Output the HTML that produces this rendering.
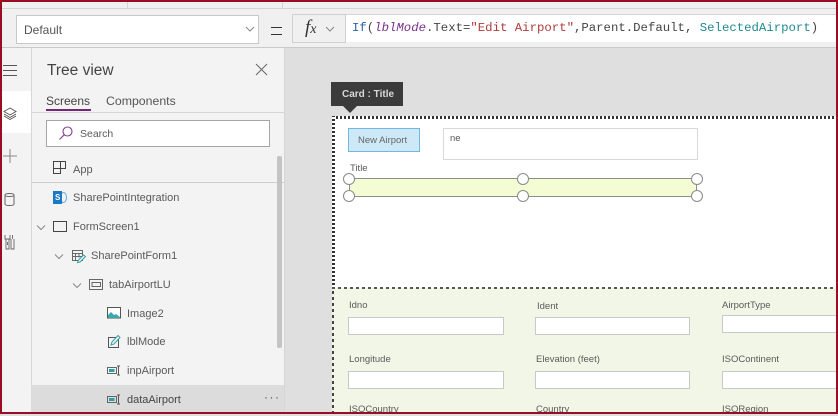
<!DOCTYPE html>
<html><head><meta charset="utf-8"><style>
html,body{margin:0;padding:0}
body{width:838px;height:414px;overflow:hidden;position:relative;background:#dfdfdf;font-family:"Liberation Sans",sans-serif;color:#444}
div,span.a,svg{position:absolute}
.t{white-space:nowrap;line-height:16px;font-size:11px;color:#5a5a5a}
.l{white-space:nowrap;line-height:12px;font-size:9.5px;color:#5a5a5a}
.i{background:#fff;border:1px solid #c8c8c8;box-sizing:border-box;height:18px}
.h{width:10px;height:10px;border-radius:50%;background:#fff;border:1.5px solid #8a8a8a;box-sizing:content-box}
</style></head><body>
<div style="left:0;top:0;width:838px;height:8px;background:#f0f0f0"></div>
<div style="left:127px;top:2px;width:1px;height:6px;background:#d4d4d4"></div>
<div style="left:282px;top:2px;width:1px;height:6px;background:#d4d4d4"></div>
<div style="left:0;top:8px;width:838px;height:1px;background:#d4d4d4"></div>
<div style="left:0;top:9px;width:838px;height:38px;background:#f0f0f0"></div>
<div style="left:16px;top:15px;width:243px;height:29px;background:#fff;border:1px solid #c8c8c8;box-sizing:border-box"></div>
<div class="t" style="left:24px;top:22px;font-size:12px;color:#555">Default</div>
<svg style="left:245px;top:25px" width="10" height="8"><path d="M1 2l4 4 4-4" fill="none" stroke="#888"/></svg>
<div style="left:271px;top:27px;width:11px;height:1px;background:#333"></div>
<div style="left:271px;top:34px;width:11px;height:1px;background:#333"></div>
<div style="left:292px;top:14px;width:54px;height:29px;background:#f0f0f0;border:1px solid #d0d0d0;box-sizing:border-box"></div>
<div style="left:305px;top:17px;font:italic 19px/22px 'Liberation Serif',serif;color:#333;white-space:nowrap">f<span style="font-size:14px">x</span></div>
<svg style="left:325px;top:25px" width="10" height="8"><path d="M1 2l4 4 4-4" fill="none" stroke="#888"/></svg>
<div style="left:346px;top:14px;width:492px;height:28px;background:#fff;border-top:1px solid #d4d4d4;box-sizing:border-box"></div>
<div style="left:352px;top:20px;font:12.33px/16px 'Liberation Mono',monospace;color:#444;white-space:pre"><span style="color:#2b63a8">If</span>(<span style="color:#7a2e8e;font-style:italic">lblMode</span>.Text=<span style="color:#b03a3a">"Edit Airport"</span>,Parent.Default, <span style="color:#1f8a8f">SelectedAirport</span>)</div>
<div style="left:0;top:47px;width:838px;height:1px;background:#c9c9c9"></div>

<div style="left:0;top:48px;width:31px;height:366px;background:#f3f3f3"></div>
<div style="left:0;top:91px;width:31px;height:42px;background:#fff"></div>
<div style="left:31px;top:48px;width:1px;height:366px;background:#d6d6d6"></div>
<div style="left:32px;top:48px;width:252px;height:366px;background:#f3f3f3"></div>
<svg style="left:0;top:48px" width="31" height="366" fill="none" stroke="#555">
<path d="M3 17.500h14M3 22.500h14M3 27.500h14"/>
<path d="M10 60l6 3.500-6 3.500-6-3.500zM4 66l6 3.500 6-3.500M4 68l6 3.500 6-3.500" stroke-width=".9"/>
<path d="M10 101v14M3 108h14" stroke="#888"/>
<path d="M5 147v9c0 2 9 2 9 0v-9c0-2-9-2-9 0c0 2 9 2 9 0" stroke="#666"/>
<path d="M6 191v10h3v-10M11 191v10h3v-10M5 187v4h5v-4M12.500 187v4M7.500 194v3" stroke="#666" stroke-width=".9"/>
</svg>
<div style="left:47px;top:61px;font-size:15.500px;line-height:20px;color:#444;white-space:nowrap">Tree view</div>
<svg style="left:255px;top:63px" width="13" height="13"><path d="M1 1l11 11M12 1L1 12" stroke="#666" fill="none"/></svg>
<div class="t" style="left:46px;top:93px;font-size:12px;color:#444">Screens</div>
<div class="t" style="left:106px;top:93px;font-size:12.300px;color:#555">Components</div>
<div style="left:46px;top:109px;width:45px;height:2px;background:#742774"></div>
<div style="left:32px;top:112px;width:252px;height:1px;background:#d6d6d6"></div>
<div style="left:46px;top:120px;width:224px;height:27px;background:#fff;border:1px solid #a6a6a6;box-sizing:border-box"></div>
<svg style="left:58px;top:125px" width="16" height="16" fill="none" stroke="#8a3d8f" stroke-width="1.100"><circle cx="9.500" cy="6.500" r="4.500"/><path d="M6.300 9.700L1.500 14.500"/></svg>
<div class="l" style="left:80px;top:128px;font-size:10.500px">Search</div>

<svg style="left:53px;top:161px" width="14" height="14" fill="none" stroke="#444"><path d="M.5 7.500h12V.5H.5v12h7V.5"/></svg>
<div class="t" style="left:73px;top:162px">App</div>
<div style="left:32px;top:182px;width:252px;height:1px;background:#cfcfcf"></div>

<div style="left:60px;top:192px;width:7px;height:11px;border-radius:50%;border:1px solid #5ab0e0;box-sizing:border-box"></div>
<div style="left:53px;top:191px;width:9px;height:13px;background:#1b78c4"></div>
<div style="left:55px;top:192px;font:bold 8px/11px 'Liberation Sans',sans-serif;color:#fff">S</div>
<div class="t" style="left:73px;top:190px">SharePointIntegration</div>

<svg style="left:36px;top:224px" width="11" height="8"><path d="M1 1.500l4 4 4-4" fill="none" stroke="#888"/></svg>
<div style="left:53px;top:221px;width:14px;height:11px;border:1px solid #444;box-sizing:border-box"></div>
<div class="t" style="left:73px;top:219px">FormScreen1</div>

<svg style="left:54px;top:253px" width="11" height="8"><path d="M1 1.500l4 4 4-4" fill="none" stroke="#888"/></svg>
<svg style="left:72px;top:250px" width="14" height="14" fill="none"><path d="M.5.500h10v10H.5zM.5 3.500h10M.5 6.500h10M3.500 3.500v7M7 3.500v4" stroke="#666"/><path d="M5.500 12.500l1-2.500 5-5 2 1.500-5.500 5.500z" stroke="#2f9fa8" fill="#f3f3f3"/></svg>
<div class="t" style="left:91px;top:248px">SharePointForm1</div>

<svg style="left:72px;top:282px" width="11" height="8"><path d="M1 1.500l4 4 4-4" fill="none" stroke="#888"/></svg>
<svg style="left:89px;top:279px" width="14" height="11" fill="none" stroke="#666"><path d="M.5.500h13v10H.5zM3 3.500h8.500v4H3z"/></svg>
<div class="t" style="left:109px;top:277px">tabAirportLU</div>

<svg style="left:107px;top:307px" width="15" height="12"><rect x=".5" y=".5" width="13" height="10.500" fill="#fff" stroke="#555"/><path d="M1 11V8l3-3 3 3 2-1 4 3v1z" fill="#3aa8ad"/></svg>
<div class="t" style="left:127px;top:306px">Image2</div>

<svg style="left:108px;top:334px" width="14" height="15" fill="none"><path d="M.5 3.500h10v10H.5z" stroke="#555"/><path d="M3 11l1-3 6-6.500 2 2-6 6.500z" stroke="#2f9fa8" fill="#f3f3f3"/></svg>
<div class="t" style="left:127px;top:334px">lblMode</div>

<svg style="left:107px;top:365px" width="16" height="12" fill="none"><rect x=".5" y="2.500" width="9" height="6" stroke="#666"/><rect x="2" y="4" width="5.500" height="3" fill="#2f9fa8"/><path d="M10 1h3M10 10h3M11.500 1v9" stroke="#555"/></svg>
<div class="t" style="left:127px;top:363px">inpAirport</div>

<div style="left:277px;top:156px;width:5px;height:192px;background:#c4c4c4;border-radius:2px"></div>
<div style="left:284px;top:48px;width:1px;height:366px;background:#d6d6d6"></div>

<div style="left:31px;top:385px;width:253px;height:29px;background:#dcdcdc"></div>
<svg style="left:107px;top:394px" width="16" height="12" fill="none"><rect x=".5" y="2.500" width="9" height="6" stroke="#666"/><rect x="2" y="4" width="5.500" height="3" fill="#2f9fa8"/><path d="M10 1h3M10 10h3M11.500 1v9" stroke="#555"/></svg>
<div class="t" style="left:127px;top:392px;color:#444">dataAirport</div>
<div style="left:264px;top:390px;font-size:12px;line-height:14px;color:#555;letter-spacing:1.500px">···</div>

<div style="left:331px;top:82px;width:72px;height:24px;background:#3b3b3b"></div>
<div style="left:342px;top:88px;font-size:10px;font-weight:bold;line-height:14px;color:#d8d8d8;white-space:nowrap">Card : Title</div>
<div style="left:343px;top:106px;width:0;height:0;border-left:7px solid transparent;border-right:7px solid transparent;border-top:7px solid #3b3b3b"></div>

<div style="left:332px;top:116px;width:506px;height:173px;background:#fff"></div>
<div style="left:332px;top:116px;width:506px;height:3px;background:repeating-linear-gradient(90deg,#333 0 2px,#fff 2px 4px)"></div>
<div style="left:332px;top:116px;width:3px;height:173px;background:repeating-linear-gradient(0deg,#333 0 2px,#fff 2px 4px)"></div>

<div style="left:348px;top:128px;width:72px;height:24px;background:#cde8f6;border:1px solid #74b5e4;box-sizing:border-box"></div>
<div class="l" style="left:358px;top:135px;color:#666">New Airport</div>
<div style="left:443px;top:128px;width:255px;height:32px;background:#fff;border:1px solid #d8d8d8;box-sizing:border-box"></div>
<div class="l" style="left:450px;top:133px">ne</div>
<div class="l" style="left:350px;top:163px">Title</div>
<div style="left:349px;top:178px;width:348px;height:18.500px;background:#f4fcd4;border:1px solid #8c8c8c;box-sizing:border-box"></div>
<div class="h" style="left:343px;top:173px"></div>
<div class="h" style="left:517px;top:173px"></div>
<div class="h" style="left:691px;top:173px"></div>
<div class="h" style="left:343px;top:190px"></div>
<div class="h" style="left:517px;top:190px"></div>
<div class="h" style="left:691px;top:190px"></div>

<div style="left:332px;top:288px;width:506px;height:126px;background:#f2f6e7"></div>
<div style="left:332px;top:287px;width:506px;height:1.500px;background:repeating-linear-gradient(90deg,#555 0 3px,transparent 3px 6px)"></div>
<div style="left:332px;top:288px;width:2px;height:126px;background:repeating-linear-gradient(0deg,#444 0 3px,transparent 3px 6px)"></div>

<div class="l" style="left:349px;top:300px">Idno</div>
<div class="l" style="left:537px;top:301px">Ident</div>
<div class="l" style="left:722px;top:300px">AirportType</div>
<div class="i" style="left:348px;top:317px;width:156px"></div>
<div class="i" style="left:535px;top:317px;width:155px"></div>
<div class="i" style="left:722px;top:315px;width:116px"></div>
<div class="l" style="left:349px;top:354px">Longitude</div>
<div class="l" style="left:536px;top:354px">Elevation (feet)</div>
<div class="l" style="left:722px;top:354px">ISOContinent</div>
<div class="i" style="left:348px;top:371px;width:156px"></div>
<div class="i" style="left:535px;top:371px;width:155px"></div>
<div class="i" style="left:722px;top:371px;width:116px"></div>
<div class="l" style="left:349px;top:404px">ISOCountry</div>
<div class="l" style="left:536px;top:404px">Country</div>
<div class="l" style="left:722px;top:404px">ISORegion</div>

<div style="left:0;top:0;width:838px;height:2px;background:#980c24"></div>
<div style="left:0;top:0;width:2px;height:414px;background:#980c24"></div>
<div style="left:836px;top:0;width:2px;height:414px;background:#980c24"></div>
<div style="left:0;top:412px;width:838px;height:2px;background:#980c24"></div>
</body></html>
